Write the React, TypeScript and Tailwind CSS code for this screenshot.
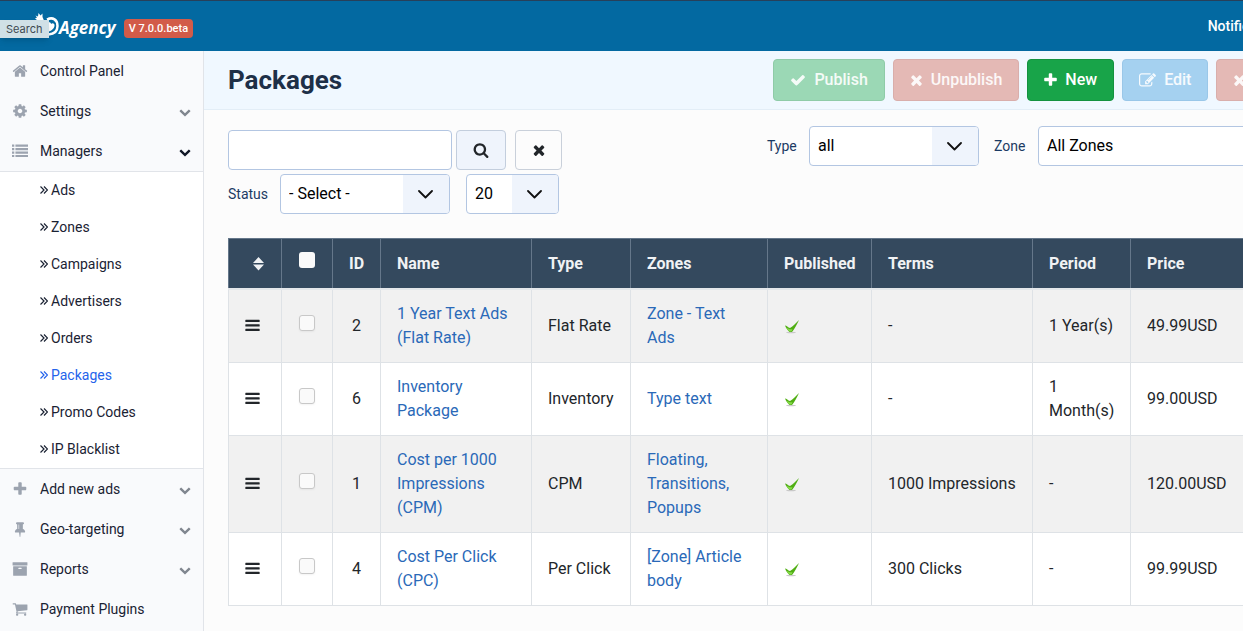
import React from 'react';

const icons = {
  home: 'M1472 992v480q0 26-19 45t-45 19h-384v-384h-256v384h-384q-26 0-45-19t-19-45v-480q0-1 .5-3t.5-3l575-474 575 474q1 2 1 6zm223-69l-62 74q-8 9-21 11h-3q-13 0-21-7l-692-577-692 577q-12 8-24 7-13-2-21-11l-62-74q-8-10-7-23.5t11-21.5l719-599q32-26 76-26t76 26l244 204v-195q0-14 9-23t23-9h192q14 0 23 9t9 23v408l219 182q10 8 11 21.5t-7 23.5z',
  cog: 'M1152 896q0-106-75-181t-181-75-181 75-75 181 75 181 181 75 181-75 75-181zm512-109v222q0 12-8 23t-20 13l-185 28q-19 54-39 91 35 50 107 138 10 12 10 25t-9 23q-27 37-99 108t-94 71q-12 0-26-9l-138-108q-44 23-91 38-16 136-29 186-7 28-36 28h-222q-14 0-24.5-8.5t-11.5-21.5l-28-184q-49-16-90-37l-141 107q-10 9-25 9-14 0-25-11-126-114-165-168-7-10-7-23 0-12 8-23 15-21 51-66.5t54-70.5q-27-50-41-99l-183-27q-13-2-21-12.5t-8-23.5v-222q0-12 8-23t19-13l186-28q14-46 39-92-40-57-107-138-10-12-10-24 0-10 9-23 26-36 98.5-107.5t94.5-71.5q13 0 26 10l138 107q44-23 91-38 16-136 29-186 7-28 36-28h222q14 0 24.5 8.5t11.5 21.5l28 184q49 16 90 37l142-107q9-9 24-9 13 0 25 10 129 119 165 170 7 8 7 22 0 12-8 23-15 21-51 66.5t-54 70.5q26 50 41 98l183 28q13 2 21 12.5t8 23.5z',
  list: 'M0 160h256v250H0zM384 160h1408v250H384zM0 550h256v250H0zM384 550h1408v250H384zM0 940h256v250H0zM384 940h1408v250H384zM0 1330h256v250H0zM384 1330h1408v250H384z',
  plus: 'M1600 736v192q0 40-28 68t-68 28h-416v416q0 40-28 68t-68 28h-192q-40 0-68-28t-28-68v-416h-416q-40 0-68-28t-28-68v-192q0-40 28-68t68-28h416v-416q0-40 28-68t68-28h192q40 0 68 28t28 68v416h416q40 0 68 28t28 68z',
  pin: 'M800 864v-448q0-14-9-23t-23-9-23 9-9 23v448q0 14 9 23t23 9 23-9 9-23zm672 352q0 26-19 45t-45 19h-429l-51 483q-2 12-10.5 20.5t-20.5 8.5h-1q-27 0-32-27l-76-485h-404q-26 0-45-19t-19-45q0-123 78.5-221.5t177.5-98.5v-512q-52 0-90-38t-38-90 38-90 90-38h640q52 0 90 38t38 90-38 90-90 38v512q99 0 177.5 98.5t78.5 221.5z',
  archive: 'M1088 832q0-26-19-45t-45-19h-256q-26 0-45 19t-19 45 19 45 45 19h256q26 0 45-19t19-45zm576-192v960q0 26-19 45t-45 19h-1408q-26 0-45-19t-19-45v-960q0-26 19-45t45-19h1408q26 0 45 19t19 45zm64-448v256q0 26-19 45t-45 19h-1536q-26 0-45-19t-19-45v-256q0-26 19-45t45-19h1536q26 0 45 19t19 45z',
  cart: 'M704 1536q0 52-38 90t-90 38-90-38-38-90 38-90 90-38 90 38 38 90zm896 0q0 52-38 90t-90 38-90-38-38-90 38-90 90-38 90 38 38 90zm128-1088v512q0 24-16.5 42.5t-40.5 21.5l-1044 122q13 60 13 70 0 16-24 64h920q26 0 45 19t19 45-19 45-45 19h-1024q-26 0-45-19t-19-45q0-11 8-31.5t16-36 21.5-40 15.5-29.5l-177-823h-204q-26 0-45-19t-19-45 19-45 45-19h256q16 0 28.5 6.5t19.5 15.5 13 24.5 8 26 5.5 29.5 4.5 26h1201q26 0 45 19t19 45z',
  chevron: 'M1683 808l-742 741q-19 19-45 19t-45-19l-742-741q-19-19-19-45.5t19-45.5l166-165q19-19 45-19t45 19l531 531 531-531q19-19 45-19t45 19l166 165q19 19 19 45.5t-19 45.5z',
  search: 'M1216 832q0-185-131.5-316.5t-316.5-131.5-316.5 131.5-131.5 316.5 131.5 316.5 316.5 131.5 316.5-131.5 131.5-316.5zm512 832q0 52-38 90t-90 38q-54 0-90-38l-343-342q-179 124-399 124-143 0-273.5-55.5t-225-150-150-225-55.5-273.5 55.5-273.5 150-225 225-150 273.5-55.5 273.5 55.5 225 150 150 225 55.5 273.5q0 220-124 399l343 343q37 37 37 90z',
  times: 'M1490 1322q0 40-28 68l-136 136q-28 28-68 28t-68-28l-294-294-294 294q-28 28-68 28t-68-28l-136-136q-28-28-28-68t28-68l294-294-294-294q-28-28-28-68t28-68l136-136q28-28 68-28t68 28l294 294 294-294q28-28 68-28t68 28l136 136q28 28 28 68t-28 68l-294 294 294 294q28 28 28 68z',
  check: 'M1671 566q0 40-28 68l-724 724-136 136q-28 28-68 28t-68-28l-136-136-362-362q-28-28-28-68t28-68l136-136q28-28 68-28t68 28l294 295 656-657q28-28 68-28t68 28l136 136q28 28 28 68z',
  edit: 'M888 1184l116-116-152-152-116 116v56h96v96h56zm440-720q-16-16-33 1l-350 350q-17 17-1 33t33-1l350-350q17-17 1-33zm80 594v190q0 119-84.5 203.5t-203.5 84.5h-832q-119 0-203.5-84.5t-84.5-203.5v-832q0-119 84.5-203.5t203.5-84.5h832q63 0 117 25 15 7 18 23 3 17-9 29l-49 49q-14 14-32 8-23-6-45-6h-832q-66 0-113 47t-47 113v832q0 66 47 113t113 47h832q66 0 113-47t47-113v-126q0-13 9-22l64-64q15-15 35-7t20 29zm-96-738l288 288-672 672h-288v-288zm444 132l-92 92-288-288 92-92q28-28 68-28t68 28l152 152q28 28 28 68t-28 68z',
  bars: 'M100 200h1592q60 0 60 60v150q0 60-60 60H100q-60 0-60-60V260q0-60 60-60zM100 740h1592q60 0 60 60v150q0 60-60 60H100q-60 0-60-60V800q0-60 60-60zM100 1280h1592q60 0 60 60v150q0 60-60 60H100q-60 0-60-60v-150q0-60 60-60z',
};

type IconName = keyof typeof icons;

// "slice" keeps the glyph at full height when the box is narrower than 16px
const Icon = ({ name, className = 'size-4' }: { name: IconName; className?: string }) => (
  <svg
    viewBox="0 0 1792 1792"
    preserveAspectRatio="xMidYMid slice"
    fill="currentColor"
    className={`shrink-0 ${className}`}
    aria-hidden="true"
  >
    <path d={icons[name]} />
  </svg>
);

interface MenuItem {
  label: string;
  icon: IconName;
  arrow?: boolean;
  children?: string[];
}

const menu: MenuItem[] = [
  { label: 'Control Panel', icon: 'home' },
  { label: 'Settings', icon: 'cog', arrow: true },
  {
    label: 'Managers',
    icon: 'list',
    arrow: true,
    children: ['Ads', 'Zones', 'Campaigns', 'Advertisers', 'Orders', 'Packages', 'Promo Codes', 'IP Blacklist'],
  },
  { label: 'Add new ads', icon: 'plus', arrow: true },
  { label: 'Geo-targeting', icon: 'pin', arrow: true },
  { label: 'Reports', icon: 'archive', arrow: true },
  { label: 'Payment Plugins', icon: 'cart' },
];

interface Action {
  label: string;
  icon: IconName;
  size: string;
  style: string;
  disabled: boolean;
}

const actions: Action[] = [
  { label: 'Publish', icon: 'check', size: 'size-4', style: 'bg-[#9bd8b5] border-[#8fcba8] text-white/90', disabled: true },
  { label: 'Unpublish', icon: 'times', size: 'h-4 w-[13px]', style: 'bg-[#e4b9b5] border-[#d9aeab] text-white/90', disabled: true },
  { label: 'New', icon: 'plus', size: 'h-4 w-[13px]', style: 'bg-[#18a449] border-[#14923f] text-white', disabled: false },
  { label: 'Edit', icon: 'edit', size: 'size-[17px]', style: 'bg-[#a5d1f0] border-[#9ac7e8] text-white/90', disabled: true },
  { label: 'Delete', icon: 'times', size: 'h-4 w-[13px]', style: 'bg-[#e4b9b5] border-[#d9aeab] text-white/90', disabled: true },
];

const packages = [
  { id: 2, name: '1 Year Text Ads (Flat Rate)', type: 'Flat Rate', zones: 'Zone - Text Ads', terms: '-', period: '1 Year(s)', price: '49.99USD' },
  { id: 6, name: 'Inventory Package', type: 'Inventory', zones: 'Type text', terms: '-', period: '1 Month(s)', price: '99.00USD' },
  { id: 1, name: 'Cost per 1000 Impressions (CPM)', type: 'CPM', zones: 'Floating, Transitions, Popups', terms: '1000 Impressions', period: '-', price: '120.00USD' },
  { id: 4, name: 'Cost Per Click (CPC)', type: 'Per Click', zones: '[Zone] Article body', terms: '300 Clicks', period: '-', price: '99.99USD' },
];

const Logo = () => (
  <div className="flex items-center text-white">
    <svg viewBox="0 0 24 30" className="h-[30px] w-6" aria-hidden="true">
      <path d="M0.500 2.500L3 3.500 3.500 0 5.500 2.500 7.500 .5 7.500 4 9 7.500 5 9 2 7 0 5.500 2 4.500z" fill="currentColor" />
      <path d="M12 6.500C18 3.500 22.500 7 22.500 13c0 5-3.500 8-9 8.500" fill="none" stroke="currentColor" strokeWidth="2.500" />
      <path d="M12 10.500c1.500-2 4-1.500 4 .5 1.500-1.500 4-.5 3.500 2-.5 3-4 5.500-7.500 6z" fill="currentColor" />
    </svg>
    <span className="font-['Open_Sans'] text-[17px] font-bold italic">Agency</span>
  </div>
);

const Sidebar = () => (
  <nav className="w-[204px] shrink-0 border-r border-[#e1e4e9] bg-[#f9fafc] text-sm text-[#1a2233]">
    {menu.map((item) => (
      <div key={item.label}>
        <a href="#" className="flex h-10 items-center gap-3 px-3">
          <Icon name={item.icon} className="size-4 text-[#9ca3af]" />
          <span className="flex-1">{item.label}</span>
          {item.arrow && (
            <Icon
              name="chevron"
              className={item.children ? 'mt-0.5 size-3 text-[#111827]' : 'mt-0.5 size-3 text-[#80868f]'}
            />
          )}
        </a>
        {item.children && (
          <ul className="border-y border-[#e1e4e9] bg-white">
            {item.children.map((child) => (
              <li key={child}>
                <a
                  href="#"
                  className={`flex h-[37px] items-center gap-[3px] pb-0.5 pl-10 ${child === 'Packages' ? 'text-[#2563eb]' : ''}`}
                >
                  <svg viewBox="0 0 8 8" className="size-2" fill="none" stroke="currentColor" strokeWidth="1.200" aria-hidden="true">
                    <path d="M.5.5L4 4 .5 7.5M4 .5L7.500 4 4 7.500" />
                  </svg>
                  {child}
                </a>
              </li>
            ))}
          </ul>
        )}
      </div>
    ))}
  </nav>
);

interface SelectProps {
  id: string;
  value: string;
  className: string;
  label?: string;
}

const Select = ({ id, value, className, label }: SelectProps) => (
  <div className={`relative h-10 overflow-hidden rounded border border-[#b3c6e2] bg-white ${className}`}>
    <select id={id} aria-label={label} className="h-full w-full appearance-none bg-transparent pl-2 text-base text-black">
      <option>{value}</option>
    </select>
    <span className="pointer-events-none absolute inset-y-0 right-0 flex w-[46px] items-center justify-center bg-[#eff4fc]">
      <svg viewBox="0 0 16 16" className="size-4" fill="none" stroke="#111" strokeWidth="1.800" strokeLinecap="round" strokeLinejoin="round" aria-hidden="true">
        <path d="M1 5l6.500 6.500L14 5" />
      </svg>
    </span>
  </div>
);

const Filters = () => (
  <div className="flex items-start justify-between text-[#22262a]">
    <div className="flex flex-col gap-1 pt-1">
      <div className="flex items-center">
        <input type="text" aria-label="Search packages" className="mr-1 h-10 w-56 rounded border border-[#b3c6e2] bg-white px-2" />
        <button aria-label="Search" className="mr-[9px] flex h-10 w-[50px] items-center justify-center rounded border border-[#c3cedd] bg-[#eff4fc]">
          <Icon name="search" />
        </button>
        <button aria-label="Clear" className="flex h-10 w-[47px] items-center justify-center rounded border border-[#c9d0da]">
          <Icon name="times" />
        </button>
      </div>
      <div className="flex items-center">
        <label htmlFor="status" className="w-[52px] text-sm text-[#1b3a63]">Status</label>
        <Select id="status" value="- Select -" className="mr-4 w-[170px]" />
        <Select id="limit" value="20" label="Rows per page" className="w-[93px]" />
      </div>
    </div>
    <div className="flex items-center">
      <label htmlFor="type" className="w-[42px] text-sm text-[#1b3a63]">Type</label>
      <Select id="type" value="all" className="mr-[15px] w-[170px]" />
      <label htmlFor="zone" className="w-11 text-sm text-[#1b3a63]">Zone</label>
      <Select id="zone" value="All Zones" className="w-[279px]" />
    </div>
  </div>
);

const CheckMark = () => (
  <svg viewBox="0 0 16 16" className="size-4" aria-label="Published" role="img">
    <ellipse cx="7" cy="14.500" rx="5" ry=".8" fill="#c9c9c9" />
    <path d="M1 7.500C2.500 7.500 4 9.500 6 10 9 8.500 12 5 15 2 13 6.500 10.500 11 8 14H5.500C4 12.500 2 10.500 1 7.500z" fill="#4fae12" />
    <path d="M2.500 9.500C4 10.800 6 11.500 8.500 11.200L7.500 13.500H5.700C4 12.500 3 11 2.500 9.500z" fill="#86d94a" />
  </svg>
);

const th = 'h-[50px] border border-[#65778a] px-4 pt-0.5 text-left';
const td = 'border border-[#dee2e6] px-4 py-3';

const PackagesTable = () => (
  <table className="w-full table-fixed border-collapse text-base text-[#22262a]">
    <colgroup>
      <col className="w-[53px]" />
      <col className="w-[51px]" />
      <col className="w-12" />
      <col className="w-[151px]" />
      <col className="w-[99px]" />
      <col className="w-[137px]" />
      <col className="w-[104px]" />
      <col className="w-[161px]" />
      <col className="w-[98px]" />
      <col />
    </colgroup>
    <thead className="bg-[#34495e] text-[#f0f2f4]">
      <tr className="border-b-2 border-[#e4e7ea]">
        <th className={th} aria-label="Order">
          <svg viewBox="0 0 12 14" className="ml-2 h-3.5 w-3" fill="currentColor" aria-hidden="true">
            <path d="M5.500 0L11 6H0zM5.500 13.500L11 7.500H0z" />
          </svg>
        </th>
        <th className={th}>
          <input type="checkbox" aria-label="Select all" className="mx-auto mb-2 block size-4 appearance-none rounded-[3px] bg-[#fafafa]" />
        </th>
        <th className={th}>ID</th>
        <th className={th}>Name</th>
        <th className={th}>Type</th>
        <th className={th}>Zones</th>
        <th className={th}>Published</th>
        <th className={th}>Terms</th>
        <th className={th}>Period</th>
        <th className={th}>Price</th>
      </tr>
    </thead>
    <tbody>
      {packages.map((pkg) => (
        <tr key={pkg.id} className="bg-white odd:bg-[#f1f1f1]">
          <td className={td}>
            <Icon name="bars" className="size-[15px]" />
          </td>
          <td className={td}>
            <input
              type="checkbox"
              aria-label={`Select ${pkg.name}`}
              className="mx-auto mb-1.5 block size-4 appearance-none rounded-[3px] border border-[#c8c8c8] bg-[#fafafa] shadow-xs"
            />
          </td>
          <td className={`${td} text-center`}>{pkg.id}</td>
          <td className={td}>
            <a href="#" className="text-[#2a69b8]">{pkg.name}</a>
          </td>
          <td className={td}>{pkg.type}</td>
          <td className={td}>
            <a href="#" className="text-[#2a69b8]">{pkg.zones}</a>
          </td>
          <td className={td}>
            <CheckMark />
          </td>
          <td className={td}>{pkg.terms}</td>
          <td className={td}>{pkg.period}</td>
          <td className={td}>{pkg.price}</td>
        </tr>
      ))}
    </tbody>
  </table>
);

export default function App() {
  return (
    <div className="min-h-screen overflow-hidden bg-[#fcfcfc] font-[Roboto,sans-serif]">
      <div className="flex min-h-screen min-w-[1341px] flex-col">
        <header className="relative flex h-[51px] items-center border-t border-[#27405a] bg-[#0369a1] pr-[53px] pl-[35px]">
          <div className="flex items-center gap-2 pt-1">
            <Logo />
            <span className="rounded bg-[#d25b49] px-[5px] text-[11px] leading-[19px] font-medium text-white">V 7.0.0.beta</span>
          </div>
          <a href="#" className="ml-auto text-sm font-medium text-white">Notifications</a>
          <span className="absolute top-[19px] left-0 bg-[#d0e0e6] px-1.5 font-[Inter] text-[11px] leading-[18px] text-[#3f4a52] shadow-md">Search</span>
        </header>

        <div className="flex flex-1">
          <Sidebar />
          <main className="flex-1">
            <div className="flex items-center gap-2 border-b border-[#e3eef7] bg-[#f0f8ff] px-6 py-2">
              <h1 className="mr-auto text-[26px] leading-8 font-bold text-[#1e3048]">Packages</h1>
              {actions.map((action) => (
                <button
                  key={action.label}
                  disabled={action.disabled}
                  className={`flex h-[42px] items-center gap-2 rounded border px-4 text-base font-medium ${action.style}`}
                >
                  <Icon name={action.icon} className={action.size} />
                  {action.label}
                </button>
              ))}
            </div>
            <div className="flex flex-col gap-6 px-6 pt-4">
              <Filters />
              <PackagesTable />
            </div>
          </main>
        </div>
      </div>
    </div>
  );
}
